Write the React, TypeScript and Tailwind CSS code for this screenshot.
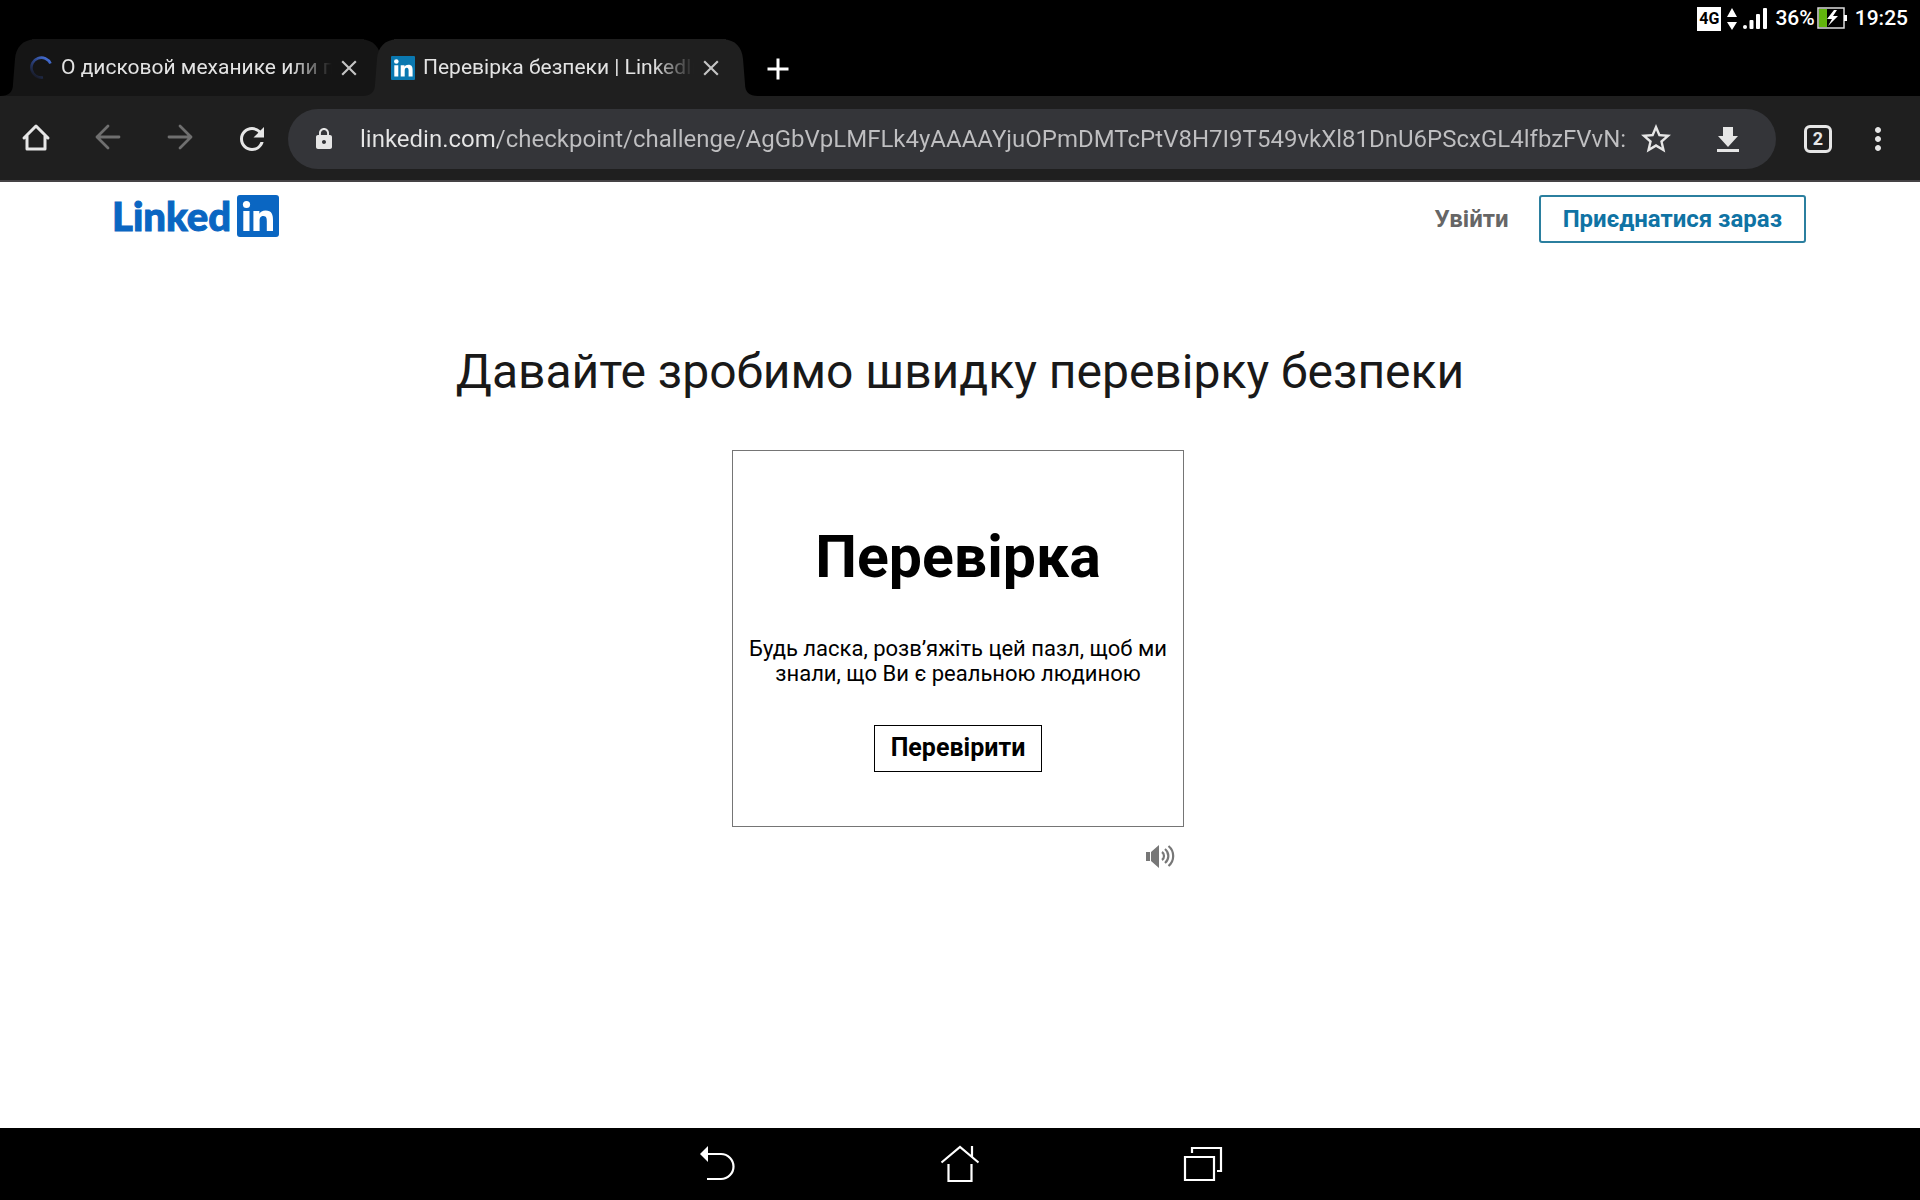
import type { ReactNode } from "react";
import { MdClose, MdLock, MdMoreVert, MdRefresh, MdStarBorder } from "react-icons/md";

function StatusBar() {
  return (
    <div className="flex h-9 items-center justify-end bg-black pt-0.5 pr-3 text-[21px] font-medium text-white">
      <span className="flex size-6 items-center justify-center bg-white text-base font-bold text-black">4G</span>
      <svg className="ml-1.5 h-6 w-2.5" viewBox="0 0 10 24" fill="#fff" aria-hidden="true">
        <path d="M5 1l5 9H0zM5 23l5-8H0z" />
      </svg>
      <svg className="ml-1.5 h-6 w-6" viewBox="0 0 24 24" fill="#fff" aria-hidden="true">
        <circle cx="2" cy="20" r="2" />
        <rect x="6.500" y="13" width="4" height="9" rx="1" />
        <rect x="13" y="7" width="4" height="15" rx="1" />
        <rect x="20" y="1" width="4" height="21" rx="1" />
      </svg>
      <span className="ml-2">36%</span>
      <svg className="ml-0.5 h-6 w-8" viewBox="0 0 32 24" aria-hidden="true">
        <rect x="1" y="1" width="26" height="20" fill="#000" stroke="#ddd" strokeWidth="1.500" />
        <rect x="2" y="2" width="8" height="18" fill="#62b50d" />
        <rect x="27" y="8" width="3" height="6" fill="#fff" />
        <path d="M17 3l-7 9h5l-4 7 10-10h-5l4-6z" fill="#fff" />
      </svg>
      <span className="ml-1.5">19:25</span>
    </div>
  );
}

function Tab({ title, icon, active }: { title: string; icon: ReactNode; active: boolean }) {
  return (
    <div
      role="tab"
      aria-selected={active}
      className={active ? "relative -ml-[34px] flex h-[57px] text-[#1f1f1f]" : "flex h-[57px] text-[#151515]"}
    >
      <svg className="h-full w-9 shrink-0" viewBox="0 0 36 57" fill="currentColor" aria-hidden="true">
        <path d="M0 57C9 57 13 53 13 45L15 20C16 8 23 0 36 0.500V57Z" />
      </svg>
      <div className={active ? "-mx-1 flex w-[332px] items-center bg-[#1f1f1f]" : "-mx-1 flex w-[332px] items-center bg-[#151515]"}>
        <span className="-ml-[3px] flex size-6 shrink-0 items-center justify-center">{icon}</span>
        <span className="ml-2 w-[271px] overflow-hidden mask-r-from-85% pt-px text-[21px] whitespace-nowrap text-[#e3e3e3]">
          {title}
        </span>
        <button type="button" aria-label="Закрити вкладку" className="ml-1 text-[#c4c4c4]">
          <MdClose className="size-[26px]" />
        </button>
      </div>
      <svg className="h-full w-9 shrink-0" viewBox="0 0 36 57" fill="currentColor" aria-hidden="true">
        <path d="M36 57C27 57 23 53 23 45L21 20C20 8 13 0 0 0.500V57Z" />
      </svg>
    </div>
  );
}

function Spinner() {
  return (
    <svg className="size-6" viewBox="0 0 24 24" fill="none" strokeWidth="2.600" aria-hidden="true">
      <defs>
        <linearGradient id="spin" x1="1" y1="0" x2="0.300" y2="1">
          <stop offset="0" stopColor="#4a78e8" />
          <stop offset="0.500" stopColor="#2c4484" />
          <stop offset="1" stopColor="#191d2c" />
        </linearGradient>
      </defs>
      <path d="M21.500 7.500A10 10 0 1 0 14 21.500" stroke="url(#spin)" />
    </svg>
  );
}

function Favicon() {
  return (
    <svg className="size-6" viewBox="0 0 24 24" aria-hidden="true">
      <rect width="24" height="24" rx="1" fill="#0a78b0" />
      <circle cx="5.300" cy="5.500" r="2.300" fill="#fff" />
      <path d="M3.300 9.200h4V20.500h-4zM9.700 9.200h3.800v1.600c.6-1.100 2-2 3.800-2 3.500 0 4.300 2.200 4.300 5.300v6.400h-4v-5.700c0-1.500-.2-3-1.900-3s-2 1.500-2 3v5.700h-4z" fill="#fff" />
    </svg>
  );
}

function Arrow({ forward }: { forward?: boolean }) {
  return (
    <svg className="size-8" viewBox="0 0 32 32" fill="none" stroke="#6f6f6f" strokeWidth="2.800" strokeLinecap="round" strokeLinejoin="round" aria-hidden="true">
      {forward ? <path d="M5 16h22M16 5l11 11-11 11" /> : <path d="M27 16H5M16 5L5 16l11 11" />}
    </svg>
  );
}

const ADDRESS =
  "linkedin.com/checkpoint/challenge/AgGbVpLMFLk4yAAAAYjuOPmDMTcPtV8H7I9T549vkXl81DnU6PScxGL4lfbzFVvN:";

function Toolbar() {
  return (
    <div className="flex h-[86px] items-center border-b-2 border-[#454345] bg-[#1f1f1f] pt-px text-[#e6e6e6]">
      <div className="flex w-[288px] shrink-0">
        <button type="button" aria-label="Головна" className="flex w-[72px] justify-center">
          <svg className="size-8" viewBox="0 0 32 32" fill="none" stroke="currentColor" strokeWidth="3" strokeLinejoin="round" strokeLinecap="round" aria-hidden="true">
            <path d="M4 17L16 5l12 12M7 15v13h18V15" />
          </svg>
        </button>
        <button type="button" aria-label="Назад" className="flex w-[72px] justify-center"><Arrow /></button>
        <button type="button" aria-label="Вперед" className="flex w-[72px] justify-center"><Arrow forward /></button>
        <button type="button" aria-label="Оновити" className="flex w-[72px] justify-center">
          <MdRefresh className="size-9" />
        </button>
      </div>
      <div className="flex h-[60px] min-w-0 flex-1 items-center rounded-full bg-[#343539] pr-8 pl-6">
        <MdLock className="size-6 shrink-0" />
        <input
          type="text"
          aria-label="Адресний рядок"
          defaultValue={ADDRESS}
          spellCheck={false}
          className="ml-6 min-w-0 flex-1 bg-[linear-gradient(90deg,#e6e6e6_138px,#bfbfc1_138px)] bg-clip-text text-2xl text-transparent caret-white outline-none"
        />
        <button type="button" aria-label="Додати закладку" className="ml-2">
          <MdStarBorder className="size-9" />
        </button>
        <button type="button" aria-label="Завантажити" className="ml-[38px]">
          <svg className="size-8" viewBox="0 0 32 32" fill="currentColor" aria-hidden="true">
            <path d="M11 4h10v9h5L16 24 6 13h5zM5 26h22v3H5z" />
          </svg>
        </button>
      </div>
      <button type="button" aria-label="Вкладки" className="ml-7 flex size-7 items-center justify-center rounded-md border-3 border-current text-lg leading-none font-bold">
        2
      </button>
      <button type="button" aria-label="Меню" className="mr-6 ml-7">
        <MdMoreVert className="size-9" />
      </button>
    </div>
  );
}

function SiteHeader() {
  return (
    <header className="flex items-start justify-between pt-[13px] pr-[114px] pl-28">
      <a href="#home" aria-label="LinkedIn" className="flex items-center gap-1.5 text-[#0a66c2]">
        <span className="font-[Lato,sans-serif] text-[40px] leading-[42px] font-black [-webkit-text-stroke:1px_#0a66c2]">Linked</span>
        <svg className="size-[42px]" viewBox="0 0 42 42" aria-hidden="true">
          <rect width="42" height="42" rx="3" fill="#0a66c2" />
          <circle cx="9.500" cy="9.500" r="3.600" fill="#fff" />
          <path d="M6.300 16h6.200v20H6.300zM16.400 16h6v2.700c.9-1.700 3-3.300 6.200-3.300 6.200 0 7.400 4.200 7.400 9.500V36h-6.200v-9.800c0-2.400-.2-5.300-3.400-5.300-3.300 0-3.800 2.500-3.800 5.200V36h-6.200z" fill="#fff" />
        </svg>
      </a>
      <nav className="flex items-center gap-[30px] text-2xl font-bold">
        <a href="#login" className="text-[#666666]">Увійти</a>
        <a href="#join" className="flex h-12 items-center rounded-[3px] border-2 border-[#2b7f9f] px-[22px] text-[#0f73a4]">
          Приєднатися зараз
        </a>
      </nav>
    </header>
  );
}

function Challenge() {
  return (
    <main className="flex flex-1 flex-col items-center pt-[99px]">
      <h1 className="text-5xl leading-[60px] text-[#191919]">Давайте зробимо швидку перевірку безпеки</h1>
      <div className="-ml-1">
        <section className="mt-12 flex h-[377px] w-[452px] flex-col items-center border border-[#757575] pt-[71px] text-black">
          <h2 className="text-[59px] leading-[70px] font-bold">Перевірка</h2>
          <p className="mt-11 text-center text-[22px] leading-[25px] whitespace-nowrap">
            Будь ласка, розв’яжіть цей пазл, щоб ми
            <br />
            знали, що Ви є реальною людиною
          </p>
          <button type="button" className="mt-[39px] flex h-[47px] items-center border border-black px-4 pb-0.5 text-[25px] font-bold">
            Перевірити
          </button>
        </section>
        <div className="mt-[15px] flex justify-end pr-2">
          <button type="button" aria-label="Звукова перевірка">
            <svg className="h-7 w-8" viewBox="0 0 32 28" fill="none" stroke="#777" strokeWidth="2.200" aria-hidden="true">
              <path d="M2 10h4v9H2zM7 10L15 3v23l-8-7z" fill="#777" stroke="none" />
              <path d="M18 10a5 5 0 0 1 0 8M21 7a9 9 0 0 1 0 14M24.500 4a13 13 0 0 1 0 20" />
            </svg>
          </button>
        </div>
      </div>
    </main>
  );
}

function SystemNav() {
  return (
    <nav className="flex h-[72px] items-center justify-center bg-black">
      <button type="button" aria-label="Назад" className="flex w-[243px] justify-center">
        <svg className="size-10" viewBox="0 0 40 40" fill="none" stroke="#fff" strokeWidth="2.200" aria-hidden="true">
          <path d="M11 10h13a12.500 12.500 0 0 1 0 25H10" />
          <path d="M3 10l8-8v16z" fill="#fff" stroke="none" />
        </svg>
      </button>
      <button type="button" aria-label="Домашній екран" className="flex w-[243px] justify-center">
        <svg className="size-10" viewBox="0 0 40 40" fill="none" stroke="#fff" strokeWidth="2.200" aria-hidden="true">
          <path d="M1.500 18.500L20 3 38.500 18.500M32 2v11M8.500 20v17h23V20" />
        </svg>
      </button>
      <button type="button" aria-label="Останні програми" className="flex w-[243px] justify-center">
        <svg className="size-10" viewBox="0 0 40 40" fill="none" stroke="#fff" strokeWidth="2.200" aria-hidden="true">
          <path d="M2 13h29v23H2zM9 9V4h29v23h-4" />
        </svg>
      </button>
    </nav>
  );
}

export default function App() {
  return (
    <div className="flex min-h-screen flex-col bg-white font-[Roboto,sans-serif]">
      <StatusBar />
      <div className="flex items-center bg-black pt-[3px]">
        <div role="tablist" className="flex">
          <Tab title="О дисковой механике или п" icon={<Spinner />} active={false} />
          <Tab title="Перевірка безпеки | LinkedIn" icon={<Favicon />} active />
        </div>
        <button type="button" aria-label="Нова вкладка" className="ml-2 pt-0.5">
          <svg className="size-6" viewBox="0 0 24 24" fill="none" stroke="#fff" strokeWidth="3" aria-hidden="true">
            <path d="M12 1.500v21M1.500 12h21" />
          </svg>
        </button>
      </div>
      <Toolbar />
      <SiteHeader />
      <Challenge />
      <SystemNav />
    </div>
  );
}
